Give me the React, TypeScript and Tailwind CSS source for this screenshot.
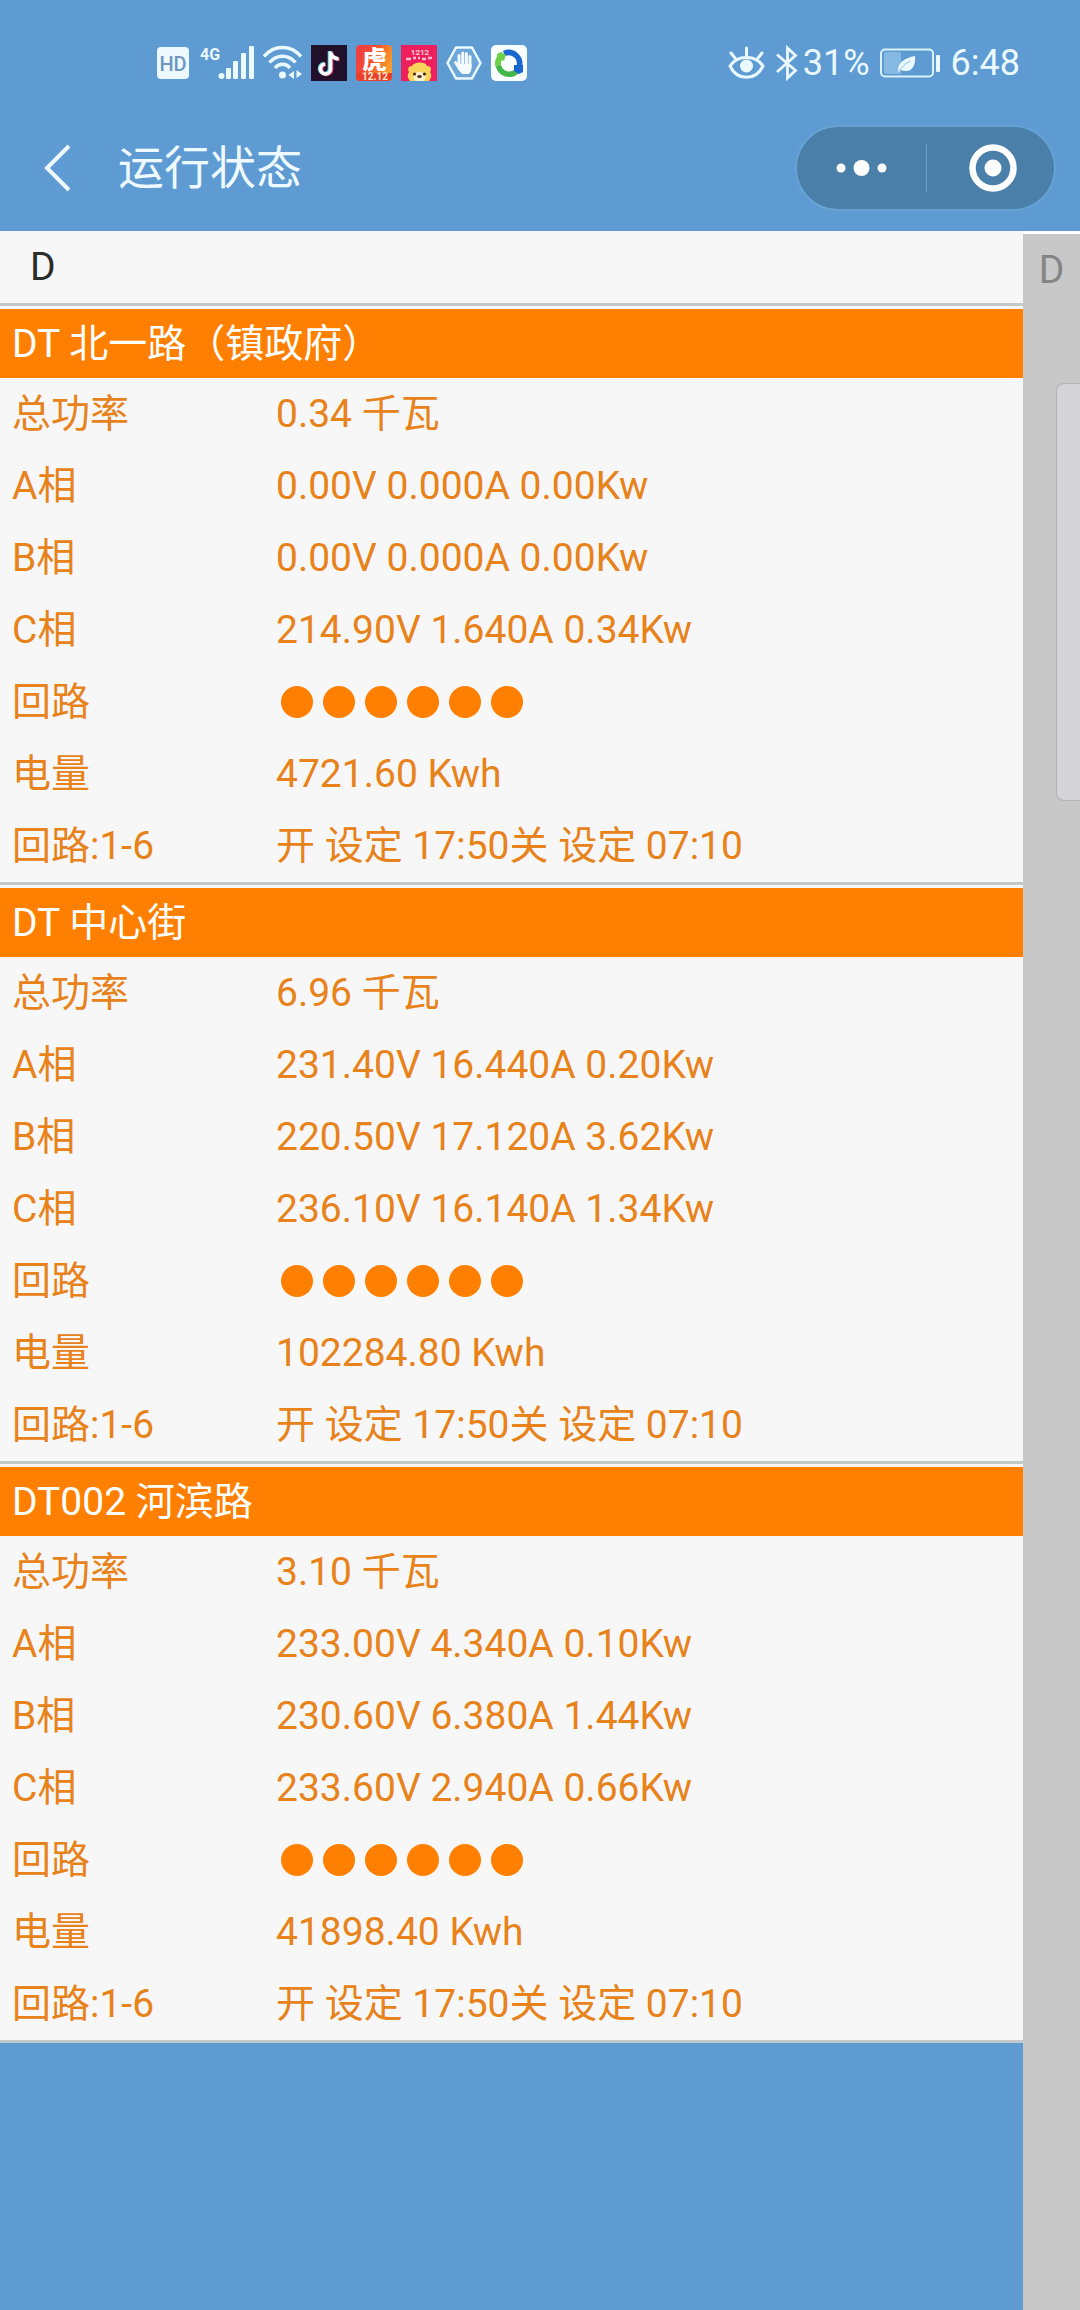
import React from "react";

type Station = {
  name: string;
  power: string;
  a: string;
  b: string;
  c: string;
  energy: string;
};

const stations: Station[] = [
  {
    name: "DT 北一路（镇政府）",
    power: "0.34 千瓦",
    a: "0.00V 0.000A 0.00Kw",
    b: "0.00V 0.000A 0.00Kw",
    c: "214.90V 1.640A 0.34Kw",
    energy: "4721.60 Kwh",
  },
  {
    name: "DT 中心街",
    power: "6.96 千瓦",
    a: "231.40V 16.440A 0.20Kw",
    b: "220.50V 17.120A 3.62Kw",
    c: "236.10V 16.140A 1.34Kw",
    energy: "102284.80 Kwh",
  },
  {
    name: "DT002 河滨路",
    power: "3.10 千瓦",
    a: "233.00V 4.340A 0.10Kw",
    b: "230.60V 6.380A 1.44Kw",
    c: "233.60V 2.940A 0.66Kw",
    energy: "41898.40 Kwh",
  },
];

function CircuitDots() {
  return (
    <div className="flex gap-[10px] pl-[5px]" role="img" aria-label="6">
      {[1, 2, 3, 4, 5, 6].map((n) => (
        <span key={n} className="size-8 rounded-full bg-[#ff8000]" />
      ))}
    </div>
  );
}

function Row({ label, children }: { label: string; children: React.ReactNode }) {
  return (
    <tr className="h-[72px]">
      <th scope="row" className="w-[276px] p-0 pl-3 text-left align-middle font-normal">
        {label}
      </th>
      <td className="p-0 align-middle">{children}</td>
    </tr>
  );
}

function StationCard({ s }: { s: Station }) {
  return (
    <section className="border-b-[3px] border-[#c3c8cb]">
      <h2 className="flex h-[69px] items-center bg-[#ff8000] px-3 leading-10 text-white">{s.name}</h2>
      <table className="w-full table-fixed border-collapse text-[#e8821a]">
        <tbody>
          <Row label="总功率">{s.power}</Row>
          <Row label="A相">{s.a}</Row>
          <Row label="B相">{s.b}</Row>
          <Row label="C相">{s.c}</Row>
          <Row label="回路">
            <CircuitDots />
          </Row>
          <Row label="电量">{s.energy}</Row>
          <Row label="回路:1-6">开 设定 17:50关 设定 07:10</Row>
        </tbody>
      </table>
    </section>
  );
}

function StatusBar() {
  return (
    <div className="flex h-[126px] items-center justify-between pr-[60px] pl-[157px] text-[36px] text-[#eaf9ff]">
      <div className="flex items-center gap-[9px]">
        <svg width="32" height="36" viewBox="0 0 32 36">
          <rect x="0" y="2" width="32" height="32" rx="4" fill="#eef9ff" />
          <text x="16" y="26" textAnchor="middle" fontFamily="Roboto, sans-serif" fontWeight="500" fontSize="20" fill="#6f97bd">HD</text>
        </svg>
        <svg width="56" height="36" viewBox="0 0 56 36" fill="#eaf9ff" className="overflow-visible">
          <text x="2" y="15" fontFamily="Roboto, sans-serif" fontWeight="700" fontSize="16" fill="#eaf9ff">4G</text>
          <circle cx="23.500" cy="31" r="3" />
          <rect x="28" y="23" width="5" height="11" rx="1" />
          <rect x="35" y="16" width="5" height="18" rx="1" />
          <rect x="43" y="8" width="5" height="26" rx="1" />
          <rect x="51" y="1" width="5" height="33" rx="1" />
        </svg>
        <svg width="39" height="36" viewBox="0 0 39 36" fill="none" stroke="#eaf9ff" strokeWidth="3.500">
          <path d="M1 11.500C11-.5 28-.5 38 11.500" />
          <path d="M6.500 17.500c7-8.500 19-8.500 26 0" />
          <path d="M12 23c4-5 11-5 15 0" />
          <circle cx="19.500" cy="30" r="3.500" fill="#eaf9ff" stroke="none" />
          <path d="M31 26v8l-5.500-4zM33.500 25v8l5.500-4z" fill="#eaf9ff" stroke="none" />
        </svg>
        <svg width="36" height="36" viewBox="0 0 36 36">
          <rect width="36" height="36" fill="#22102b" />
          <g fill="none" strokeWidth="3.600">
            <path d="M18.500 6v18a5 5 0 1 1-5.500-5.500M18.500 7c1 4 4 6 8 6.500" stroke="#4fd5dc" />
            <path d="M20.500 7v18a5 5 0 1 1-5.500-5.500M20.500 8c1 4 4 6 8 6.500" stroke="#e0426b" />
            <path d="M19.500 6.500v18a5 5 0 1 1-5.500-5.500M19.500 7.500c1 4 4 6 8 6.500" stroke="#fff" />
          </g>
        </svg>
        <svg width="36" height="36" viewBox="0 0 36 36" className="overflow-visible">
          <defs>
            <linearGradient id="tiger" x1="0" x2="1" y1="0" y2="0.400">
              <stop offset="0" stopColor="#ee3a4a" />
              <stop offset="0.500" stopColor="#f4502c" />
              <stop offset="1" stopColor="#f99a2c" />
            </linearGradient>
          </defs>
          <rect width="36" height="36" rx="4" fill="url(#tiger)" />
          <path d="M0 28h36v4a4 4 0 0 1-4 4H4a4 4 0 0 1-4-4z" fill="#e8402e" />
          <text x="18.500" y="24" textAnchor="middle" fontFamily="'Noto Sans CJK SC', sans-serif" fontWeight="900" fontSize="25" fill="#fff">虎</text>
          <text x="19" y="35" textAnchor="middle" fontFamily="Roboto, sans-serif" fontWeight="700" fontSize="10" fill="#ffe9c8">12.12</text>
        </svg>
        <svg width="36" height="36" viewBox="0 0 36 36">
          <rect width="36" height="36" fill="#ee1f5c" />
          <text x="19" y="10" textAnchor="middle" fontFamily="Roboto, sans-serif" fontWeight="700" fontSize="8" fill="#fbd0d8">1212</text>
          <path d="M5 14h5M12 13h3M17 13h2M21 14h4M27 13h4" stroke="#fbc0cc" strokeWidth="2.500" />
          <path d="M9 36c-1-2-4-4-1-9-2-4 0-6 3-6 2-4 13-5 15 0 4 0 5 3 3 6 3 4 0 7-1 9z" fill="#f8d45a" />
          <ellipse cx="18.500" cy="32" rx="6" ry="5" fill="#fff0cf" />
          <circle cx="13.500" cy="29" r="1.600" fill="#4a2b12" />
          <circle cx="23.500" cy="29" r="1.600" fill="#4a2b12" />
          <ellipse cx="18.500" cy="31.500" rx="2.200" ry="1.500" fill="#4a2b12" />
        </svg>
        <svg width="36" height="36" viewBox="0 0 36 36">
          <path d="M10 2.500h16L34.500 18 26 33.500H10L1.500 18z" fill="#6da6d8" stroke="#eaf9ff" strokeWidth="2.500" strokeLinejoin="round" />
          <g stroke="#f4fcff" strokeWidth="3" strokeLinecap="round" fill="none">
            <path d="M13 10.500V22M16.700 8V21M20.400 8.500V21M24 11.500V22M9.500 17.500l4 6" />
          </g>
          <path d="M11.500 19h14v4c0 3-1.500 5-3 6h-6c-2-1.500-4-4-5-6z" fill="#f4fcff" />
        </svg>
        <svg width="36" height="36" viewBox="0 0 36 36">
          <rect width="36" height="36" rx="5" fill="#f8fdff" />
          <g fill="none" strokeWidth="5.500">
            <path d="M13 8.500A11 11 0 0 1 28 22" stroke="#1767cf" />
            <path d="M26 26A11 11 0 0 1 8 14" stroke="#42b649" />
            <path d="M7.300 21a11 11 0 0 1 2.700-10" stroke="#6fd04a" />
          </g>
          <path d="M23 20l9 0v7l-4 2-5-3z" fill="#1767cf" />
          <path d="M13 15.500L6 15V9l4-2 5 3z" fill="#6fd04a" />
        </svg>
      </div>
      <div className="flex items-center gap-[10px]">
        <svg width="37" height="36" viewBox="0 0 37 36" fill="none" stroke="#eaf9ff" strokeWidth="3" strokeLinecap="round">
          <path d="M2 21C9 9.500 28 9.500 35 21 28 36 9 36 2 21z" />
          <circle cx="18.500" cy="21" r="6.500" fill="#eaf9ff" stroke="none" />
          <path d="M18.500 3v7M3 8l4 5M34 8l-4 5" />
        </svg>
        <div className="flex items-center gap-1">
          <svg width="24" height="36" viewBox="0 0 24 36" fill="none" stroke="#eaf9ff" strokeWidth="2.800">
            <path d="M2 9.500 20.500 25.500 12.500 33V3l8 7.500L2 27" />
          </svg>
          <span>31%</span>
        </div>
        <svg width="61" height="36" viewBox="0 0 61 36">
          <rect x="1" y="4.500" width="52" height="27" rx="4" fill="none" stroke="#d8f3fb" strokeWidth="2" />
          <rect x="4" y="7" width="17" height="22" rx="2" fill="#86b8e4" />
          <path d="M18 26c0-9 7-13 17-15 1 9-3 16-10 15-2 0-3-1-4-1l-2 2z" fill="#eaf9ff" />
          <path d="M19 26c4-5 7-8 11-10" stroke="#8bbce2" strokeWidth="1" fill="none" />
          <rect x="56" y="10" width="4" height="17" rx="1" fill="#eaf9ff" />
        </svg>
        <span>6:48</span>
      </div>
    </div>
  );
}

function TitleBar() {
  return (
    <div className="flex h-[105px] items-center justify-between pr-6 pb-[22px] pl-[43px]">
      <div className="flex items-center gap-[45px]">
        <button type="button" aria-label="返回">
          <svg width="30" height="48" viewBox="0 0 30 48" fill="none" stroke="#eefaff" strokeWidth="4">
            <path d="M26 2 4 24l22 22" />
          </svg>
        </button>
        <h1 className="text-[46px] leading-none text-[#eefaff]">运行状态</h1>
      </div>
      <div className="flex h-[86px] w-[261px] items-center rounded-full border-2 border-[#66a3d4] bg-[#4a7faa]">
        <button type="button" aria-label="更多" className="flex h-12 w-[130px] items-center justify-center border-r border-[#6f9fc6]">
          <svg width="52" height="18" viewBox="0 0 52 18" fill="#fff">
            <circle cx="5" cy="9" r="4.500" />
            <circle cx="25.500" cy="9" r="8" />
            <circle cx="46" cy="9" r="4.500" />
          </svg>
        </button>
        <button type="button" aria-label="关闭" className="flex flex-1 items-center justify-center pl-1">
          <svg width="48" height="48" viewBox="0 0 48 48">
            <circle cx="24" cy="24" r="20.500" fill="none" stroke="#fff" strokeWidth="6.500" />
            <circle cx="24" cy="24" r="8.500" fill="#fff" />
          </svg>
        </button>
      </div>
    </div>
  );
}

export default function App() {
  return (
    <div className="flex min-h-screen flex-col bg-[#5e9bd3] font-[Roboto,'Noto_Sans_CJK_SC',sans-serif] text-[39px] leading-none">
      <header>
        <StatusBar />
        <TitleBar />
      </header>
      <div className="flex flex-1">
        <main className="min-w-0 flex-1">
          <div className="bg-[#f7f7f8]">
            <div className="flex h-[75px] items-center border-b-[3px] border-[#c3c8cb] px-[30px] text-[#2b2b2b]">D</div>
            <div className="flex flex-col gap-[3px] pt-[3px]">
              {stations.map((s) => (
                <StationCard key={s.name} s={s} />
              ))}
            </div>
          </div>
        </main>
        <aside className="relative w-[57px] border-t-[3px] border-white bg-[#c8c8c8]">
          <a href="#D" className="flex h-[72px] items-center justify-center text-[#858585]">D</a>
          <div className="absolute top-[149px] right-0 h-[418px] w-6 rounded-l-lg border border-r-0 border-[#b4b4b4] bg-[#d5d5d7]" />
        </aside>
      </div>
    </div>
  );
}
